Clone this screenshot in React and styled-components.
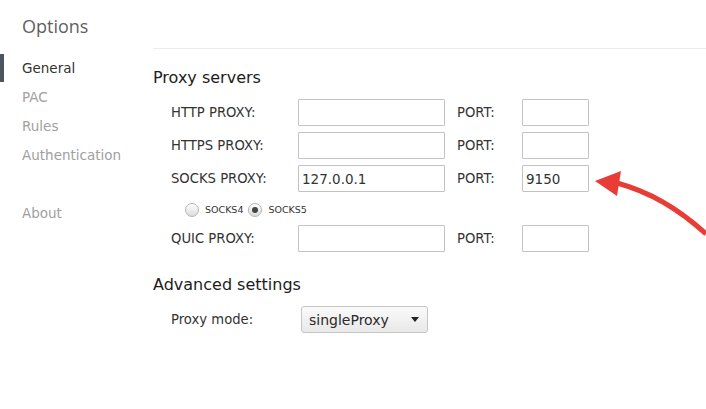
import React from 'react'
import styled, { createGlobalStyle } from 'styled-components'

const GlobalStyle = createGlobalStyle`
    html, body {
        margin: 0;
        padding: 0;
        background: #fff;
    }
    body {
        font-family: 'DejaVu Sans', 'Open Sans', sans-serif;
        color: #333;
    }
`;

const Page = styled.div`
    position: relative;
    width: 706px;
    height: 409px;
    display: flex;
    overflow: hidden;
`;

const Sidebar = styled.div`
    width: 153px;
    flex-shrink: 0;
    padding-top: 14px;
`;

const Title = styled.div`
    padding-left: 22px;
    font-family: 'Open Sans', sans-serif;
    font-size: 18px;
    line-height: 24px;
    color: #5f5f5f;
    height: 40px;
`;

const NavItem = styled.div`
    position: relative;
    height: 29px;
    line-height: 29px;
    padding-left: 22px;
    font-size: 13.5px;
    color: ${p => (p.$active ? '#333' : '#a0a0a0')};
    margin-top: ${p => (p.$gap ? '29px' : '0')};

    &::before {
        content: '';
        display: ${p => (p.$active ? 'block' : 'none')};
        position: absolute;
        left: 0;
        top: 0;
        bottom: 1px;
        width: 4px;
        background: #4c545d;
    }
`;

const Main = styled.div`
    flex: 1;
    padding-top: 48px;
`;

const Divider = styled.div`
    border-top: 1px solid #ececec;
`;

const Heading = styled.h2`
    margin: ${p => (p.$first ? '18px' : '19px')} 0 7px 0;
    font-size: 16px;
    line-height: 22px;
    font-weight: normal;
    color: #1c1c1c;
`;

const Row = styled.div`
    display: flex;
    align-items: center;
    height: 33px;
    padding-left: 18px;
`;

const Label = styled.label`
    width: ${p => p.$width || '127px'};
    font-size: 13.2px;
    color: #333;
    flex-shrink: 0;
`;

const PortLabel = styled(Label)`
    width: 65px;
    margin-left: 12px;
`;

const TextInput = styled.input`
    box-sizing: border-box;
    width: ${p => p.$width};
    height: 27px;
    margin: 0;
    padding: 0 3px;
    border: 1px solid #c3c3c3;
    border-radius: 1px;
    font-family: 'DejaVu Sans', 'Open Sans', sans-serif;
    font-size: 13.5px;
    color: #333;
    background: #fff;
    outline: none;
`;

const RadioRow = styled.div`
    display: flex;
    align-items: center;
    height: 27px;
    padding-left: 32px;
    padding-top: 2px;
    box-sizing: border-box;
`;

const RadioOption = styled.label`
    display: flex;
    align-items: center;
    margin-right: 5px;
    font-size: 9.5px;
    color: #333;
`;

const Radio = styled.span`
    box-sizing: border-box;
    width: 14px;
    height: 14px;
    border-radius: 50%;
    border: 1px solid #b4b4b4;
    background: linear-gradient(#fdfdfd, #dcdcdc);
    margin-right: 6px;
    display: flex;
    align-items: center;
    justify-content: center;
    box-shadow: inset 0 1px 1px rgba(255,255,255,0.8);

    &::after {
        content: '';
        display: ${p => (p.$checked ? 'block' : 'none')};
        width: 6px;
        height: 6px;
        border-radius: 50%;
        background: #444;
    }
`;

const Select = styled.div`
    box-sizing: border-box;
    width: 127px;
    height: 27px;
    margin-left: 3px;
    display: flex;
    align-items: center;
    justify-content: space-between;
    padding: 0 8px 0 7px;
    border: 1px solid #c6c6c6;
    border-radius: 3px;
    background: linear-gradient(#fafafa, #e8e8e8);
    font-size: 14px;
    color: #2a2a2a;
`;

const Caret = styled.span`
    width: 0;
    height: 0;
    border-left: 4px solid transparent;
    border-right: 4px solid transparent;
    border-top: 5px solid #222;
`;

const Arrow = styled.svg`
    position: absolute;
    left: 0;
    top: 0;
    pointer-events: none;
`;

const proxies = [
    { label: 'HTTP PROXY:', host: '', port: '' },
    { label: 'HTTPS PROXY:', host: '', port: '' },
    { label: 'SOCKS PROXY:', host: '127.0.0.1', port: '9150' },
];

const ProxyRow = ({ label, host, port }) => (
    <Row>
        <Label>{label}</Label>
        <TextInput $width="147px" defaultValue={host} />
        <PortLabel>PORT:</PortLabel>
        <TextInput $width="67px" defaultValue={port} />
    </Row>
);

const App = () => {
    return (
        <Page>
            <GlobalStyle />
            <Sidebar>
                <Title>Options</Title>
                <NavItem $active>General</NavItem>
                <NavItem>PAC</NavItem>
                <NavItem>Rules</NavItem>
                <NavItem>Authentication</NavItem>
                <NavItem $gap>About</NavItem>
            </Sidebar>
            <Main>
                <Divider />
                <Heading $first>Proxy servers</Heading>
                {proxies.map(p => <ProxyRow key={p.label} {...p} />)}
                <RadioRow>
                    <RadioOption><Radio />SOCKS4</RadioOption>
                    <RadioOption><Radio $checked />SOCKS5</RadioOption>
                </RadioRow>
                <ProxyRow label="QUIC PROXY:" host="" port="" />
                <Heading>Advanced settings</Heading>
                <Row>
                    <Label>Proxy mode:</Label>
                    <Select>singleProxy<Caret /></Select>
                </Row>
            </Main>
            <Arrow width="706" height="409" viewBox="0 0 706 409">
                <path d="M617 183 Q665 196 706 234" fill="none" stroke="#e83c37" strokeWidth="5" />
                <polygon points="595,181 621,171 617,196" fill="#e83c37" />
            </Arrow>
        </Page>
    )
}

export default App
